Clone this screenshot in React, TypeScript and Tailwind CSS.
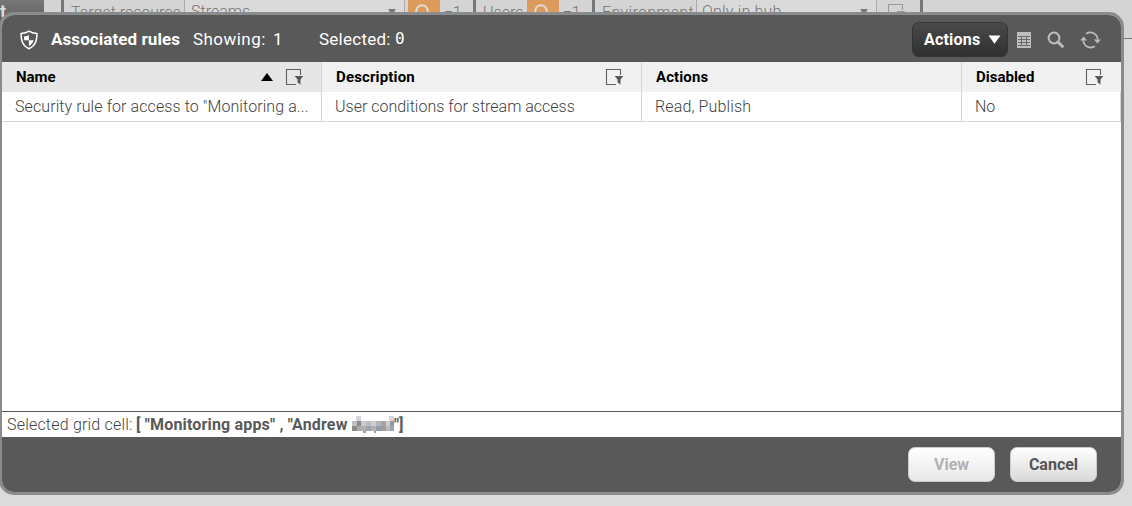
import React from 'react';

function FilterIcon({ className = '' }: { className?: string }) {
  return (
    <svg className={className} width="19" height="18" viewBox="0 0 19 18" fill="none">
      <path d="M15.5 7V1.5H1.5V16.5H11" stroke="#66605c" strokeWidth="1.1" />
      <path d="M9.6 8H18.2L15.5 11.5V16.6L12.6 14.4V11.5Z" fill="#555" />
    </svg>
  );
}

function ShieldIcon() {
  return (
    <svg width="20" height="20" viewBox="0 0 20 20" fill="none">
      <path d="M10 1.2C7.8 2.9 4.8 3.5 2 3.5C2.1 10.2 3.2 15.7 10 18.7C16.8 15.7 17.9 10.2 18 3.5C15.2 3.5 12.2 2.9 10 1.2Z" stroke="#fff" strokeWidth="1.5" strokeLinejoin="round" />
      <path d="M9.9 5V10.2H5.2C5 9 5 7.7 5 6.5C6.800 6.400 8.500 6 9.900 5Z" fill="#fff" />
      <path d="M9.900 10.200H14.600C14 12.800 12.500 14.600 9.900 16Z" fill="#fff" />
    </svg>
  );
}

function SearchRing() {
  return (
    <svg width="14" height="14" viewBox="0 0 14 14" fill="none">
      <circle cx="7" cy="7" r="5.800" stroke="#ddd" strokeWidth="2" />
    </svg>
  );
}

function TopBar() {
  return (
    <div className="flex h-[30px] w-[1132px] overflow-hidden bg-[#d4d4d4] text-[16px] leading-[20px] text-[#747474]">
      <div className="h-full w-[44px] shrink-0 bg-linear-to-b from-[#777] to-[#5b5b5b] pt-[2px] text-[18px] font-bold text-[#ddd]">t</div>
      <div className="ml-[17px] h-full w-[3px] shrink-0 bg-[#777]" />
      <div className="h-full w-[120px] shrink-0 whitespace-nowrap pl-[7px] pt-[3px] font-light">Target resource</div>
      <div className="flex h-full w-[221px] shrink-0 justify-between border-x border-[#aaa] bg-[#dadada] pl-[6px] pr-[8px] pt-[2px]">
        <span className="font-light">Streams</span>
        <svg className="mt-[7px]" width="8" height="6"><path d="M0 0H8L4 6Z" fill="#777" /></svg>
      </div>
      <div className="ml-[3px] flex h-full w-[32px] shrink-0 bg-[#dc9b5b] pl-[7px] pt-[4px]"><SearchRing /></div>
      <div className="w-[33px] shrink-0 pl-[4px] pt-[3px] font-light">=1</div>
      <div className="h-full w-[3px] shrink-0 bg-[#777]" />
      <div className="w-[51px] shrink-0 pl-[7px] pt-[3px] font-light">Users</div>
      <div className="flex h-full w-[32px] shrink-0 bg-[#dc9b5b] pl-[7px] pt-[4px]"><SearchRing /></div>
      <div className="w-[33px] shrink-0 pl-[4px] pt-[3px] font-light">=1</div>
      <div className="h-full w-[3px] shrink-0 bg-[#777]" />
      <div className="w-[101px] shrink-0 pl-[7px] pt-[3px] font-light tracking-[0.3px]">Environment</div>
      <div className="flex h-full w-[181px] shrink-0 justify-between border-x border-[#aaa] bg-[#dadada] pl-[5px] pr-[8px] pt-[2px]">
        <span className="font-light tracking-[0.2px]">Only in hub</span>
        <svg className="mt-[7px]" width="8" height="6"><path d="M0 0H8L4 6Z" fill="#777" /></svg>
      </div>
      <div className="w-[43px] shrink-0 pl-[10px] pt-[3px] opacity-50"><FilterIcon /></div>
      <div className="h-full w-[3px] shrink-0 bg-[#777]" />
    </div>
  );
}

function DialogHeader() {
  return (
    <div className="flex h-[47px] shrink-0 items-center bg-[#595959] pl-[17px] pt-[2px] text-[17px] leading-[24px] text-white">
      <ShieldIcon />
      <span className="ml-[12px] w-[142px] whitespace-nowrap pb-[2px] font-bold tracking-[0.08px]">Associated rules</span>
      <span className="w-[80px] whitespace-nowrap pb-[2px] tracking-[0.45px]">Showing:</span>
      <span className="w-[46px] pb-[2px]">1</span>
      <span className="w-[76px] whitespace-nowrap pb-[2px] tracking-[0.25px]">Selected:</span>
      <span className="pb-[2px] font-['DejaVu_Sans_Mono'] text-[16px]">0</span>
      <button className="ml-auto flex h-[35px] w-[96px] items-center justify-between rounded-[7px] border border-[#333] bg-linear-to-b from-[#4a4a4a] to-[#303030] pl-[11px] pr-[6px] text-[16px] font-bold">
        <span className="whitespace-nowrap tracking-[0.2px]">Actions</span>
        <svg width="13" height="9" viewBox="0 0 13 9"><path d="M0.500 0.500H12.500L6.500 8.700Z" fill="#fff" /></svg>
      </button>
      <svg className="ml-[9px]" width="14" height="16" viewBox="0 0 14 16">
        <path d="M0 0H14V16H0Z" fill="#bebebe" />
        <path d="M1 4.500H13M1 7.500H13M1 10.500H13M1 13.500H13M4.500 4V14M9.500 4V14" stroke="#6a6a6a" />
      </svg>
      <svg className="ml-[16px]" width="18" height="18" viewBox="0 0 18 18" fill="none" stroke="#bdbdbd">
        <circle cx="7" cy="7" r="5.400" strokeWidth="2" />
        <path d="M11 11L16.300 16.200" strokeWidth="3" />
      </svg>
      <svg className="ml-[15px] mr-[20px]" width="21" height="18" viewBox="0 0 21 18" fill="none">
        <path d="M6.200 2.700A7.500 7.500 0 0 1 17.700 8.500M14.800 15.300A7.500 7.500 0 0 1 3.300 9.500" stroke="#bdbdbd" strokeWidth="1.700" />
        <path d="M14 8.500H20.800L17.400 12.600ZM0.200 9.500H7L3.600 5.400Z" fill="#bdbdbd" />
      </svg>
    </div>
  );
}

function GridTable() {
  return (
    <div className="grid shrink-0 grid-cols-[320px_320px_320px_159px] whitespace-nowrap text-[16px] leading-[20px]">
      <div className="flex h-[30px] items-center border-r border-[#d5d5d5] bg-[#e6e6e6] pl-[14px] pr-[17px] text-[15px] font-bold text-black">
        <span className="mr-auto">Name</span>
        <svg className="mr-[12px]" width="12" height="8"><path d="M6 0L12 8H0Z" fill="#000" /></svg>
        <FilterIcon />
      </div>
      <div className="flex h-[30px] items-center border-r border-[#d5d5d5] bg-[#f1f1f1] pl-[14px] pr-[17px] text-[15px] font-bold text-black">
        <span className="mr-auto tracking-[0.15px]">Description</span>
        <FilterIcon />
      </div>
      <div className="flex h-[30px] items-center border-r border-[#d5d5d5] bg-[#f1f1f1] pl-[14px] text-[15px] font-bold tracking-[0.1px] text-black">Actions</div>
      <div className="flex h-[30px] items-center bg-[#f1f1f1] pl-[14px] pr-[17px] text-[15px] font-bold text-black">
        <span className="mr-auto">Disabled</span>
        <FilterIcon />
      </div>
      <div className="h-[30px] border-b border-r border-[#d5d5d5] pl-[13px] pt-[5px] font-light tracking-[0.09px] text-[#3f3f3f]">Security rule for access to "Monitoring a...</div>
      <div className="h-[30px] border-b border-r border-[#d5d5d5] pl-[13px] pt-[5px] font-light text-[#3f3f3f]">User conditions for stream access</div>
      <div className="h-[30px] border-b border-r border-[#d5d5d5] pl-[13px] pt-[5px] font-light tracking-[0.12px] text-[#3f3f3f]">Read, Publish</div>
      <div className="h-[30px] border-b border-r border-[#d5d5d5] pl-[13px] pt-[5px] font-light text-[#3f3f3f]">No</div>
    </div>
  );
}

function RedactedName() {
  return (
    <svg width="42" height="18" viewBox="0 0 42 18" shapeRendering="crispEdges">
      <path d="M4 0H9V5H4ZM37 0H42V5H37Z" fill="#d2d5d9" />
      <path d="M0 5H5V10H0Z" fill="#bdbfc2" /><path d="M5 5H9V10H5Z" fill="#858c98" />
      <path d="M9 5H14V10H9Z" fill="#cfcac5" /><path d="M14 5H19V10H14Z" fill="#b9bcc0" />
      <path d="M19 5H24V10H19Z" fill="#d0cdca" /><path d="M24 5H29V10H24Z" fill="#aeb5c0" />
      <path d="M29 5H34V10H29Z" fill="#aaa29c" /><path d="M34 5H38V10H34Z" fill="#cfcfcf" />
      <path d="M38 5H42V10H38Z" fill="#8e98a9" /><path d="M0 10H5V15H0Z" fill="#8c8987" />
      <path d="M5 10H9V15H5Z" fill="#aaa" /><path d="M9 10H14V15H9Z" fill="#b2afac" />
      <path d="M14 10H19V15H14Z" fill="#9da4b1" /><path d="M19 10H24V15H19Z" fill="#b5b1ae" />
      <path d="M24 10H29V15H24Z" fill="#929ba9" /><path d="M29 10H34V15H29Z" fill="#a69b94" />
      <path d="M34 10H38V15H34Z" fill="#bbb" /><path d="M38 10H42V15H38Z" fill="#9ba5b4" />
      <path d="M11 15H14V17H11ZM22 15H24V17H22Z" fill="#a99c92" />
    </svg>
  );
}

function Dialog() {
  return (
    <div className="absolute left-[-1px] top-[12px] flex h-[483px] w-[1125px] flex-col overflow-hidden rounded-[15px] border-[3px] border-[#8a8b8c] bg-white">
      <DialogHeader />
      <GridTable />
      <div className="flex-1" />
      <div className="flex h-[26px] shrink-0 items-center whitespace-nowrap border-t border-[#595959] pl-[5px] text-[16px] leading-[20px] text-[#595959]">
        <span className="w-[129px] font-light tracking-[0.2px] text-[#3f3f3f]">Selected grid cell:</span>
        <span className="w-[216px] font-bold tracking-[0.17px]">[ "Monitoring apps" , "Andrew</span>
        <RedactedName />
        <span className="font-bold">"]</span>
      </div>
      <div className="flex h-[55px] shrink-0 items-center justify-end gap-[15px] bg-[#595959] pr-[24px] text-[16px] font-bold">
        <button className="h-[35px] w-[87px] rounded-[7px] border border-[#ccc] bg-linear-to-b from-white to-[#e8e8e8] text-[#b1b1b1]">View</button>
        <button className="h-[35px] w-[87px] rounded-[7px] border border-[#ccc] bg-linear-to-b from-white to-[#d9d9d9] text-[#555]">Cancel</button>
      </div>
    </div>
  );
}

export default function App() {
  return (
    <div className="relative h-[506px] w-[1132px] overflow-hidden bg-[#dbdbdb] font-['Roboto','Liberation_Sans',sans-serif]">
      <TopBar />
      <div className="ml-auto h-[9px] w-[10px] border-b border-[#777] bg-[#d4d4d4]" />
      <Dialog />
    </div>
  );
}
